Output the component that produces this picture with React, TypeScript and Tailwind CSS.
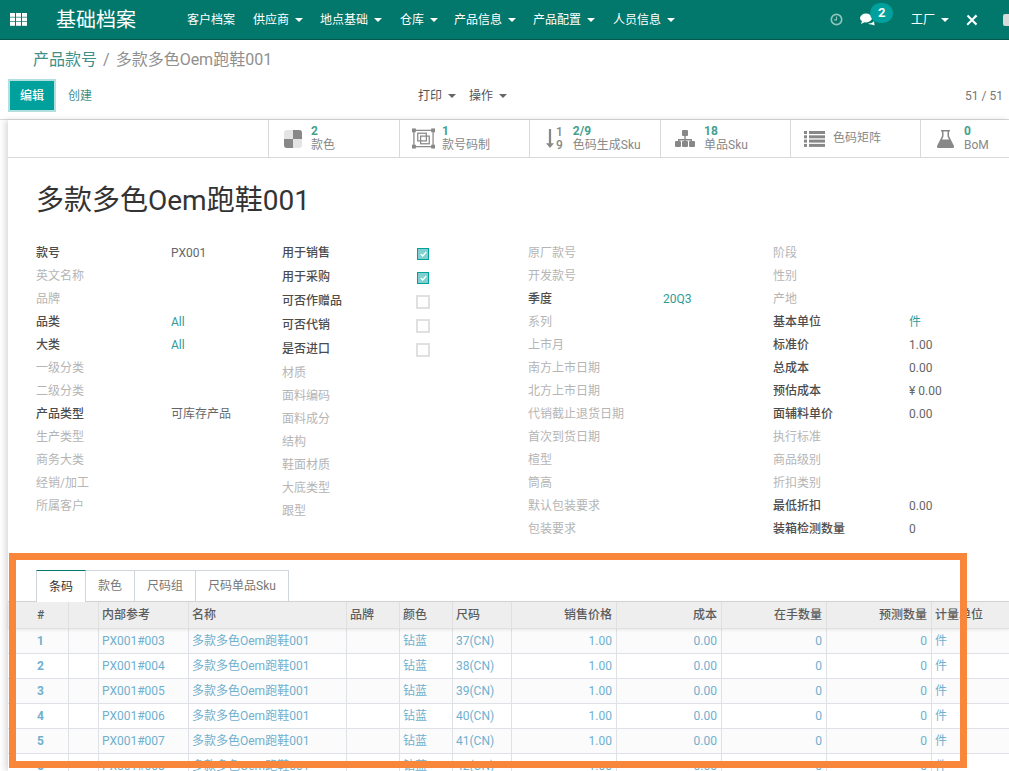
import React from "react";

const FONT = "font-['Roboto','Noto_Sans_CJK_SC',sans-serif]";

function Caret({ className = "" }: { className?: string }) {
  return <span className={"inline-block shrink-0 w-0 h-0 border-x-[4px] border-x-transparent border-t-[4px] border-t-current " + className} />;
}

const menus: [string, boolean, string][] = [
  ["客户档案", false, "mr-[18px]"],
  ["供应商", true, "mr-[17px]"],
  ["地点基础", true, "mr-[18px]"],
  ["仓库", true, "mr-[16px]"],
  ["产品信息", true, "mr-[17px]"],
  ["产品配置", true, "mr-[18px]"],
  ["人员信息", true, ""],
];

function Navbar() {
  return (
    <div className="h-[40px] shrink-0 bg-[#02776b] border-b border-b-[#02574e] flex items-center text-white text-[12px] relative whitespace-nowrap">
      <svg width="17" height="13" viewBox="0 0 17 13" className="ml-[10px] mr-[29px] shrink-0" fill="#fff">
        {[0, 6, 12].map((x) => [0, 4.5, 9].map((y) => <rect key={x + "-" + y} x={x} y={y} width="5" height="3.8" />))}
      </svg>
      <span className="text-[20px] mr-[51px] w-[80px] shrink-0 leading-none">基础档案</span>
      {menus.map(([t, c, m]) => (
        <span key={t} className={"flex items-center gap-[6px] shrink-0 " + m}>
          {t}
          {c && <Caret />}
        </span>
      ))}
      <svg width="13" height="13" viewBox="0 0 14 14" className="ml-[155px] shrink-0" fill="none" stroke="#8fc4bd" strokeWidth="1.8">
        <circle cx="7" cy="7" r="5.6" />
        <path d="M7 3.8V7.4H4.400" strokeWidth="1.200" />
      </svg>
      <div className="ml-[17px] relative flex items-center shrink-0">
        <svg width="15" height="13" viewBox="0 0 15 13" fill="#fff">
          <ellipse cx="6" cy="5" rx="6" ry="4.400" />
          <path d="M2 8l-1 3 4-2z" />
          <path d="M8 10.500c3 .2 5-.8 6-2.500l.6 4.600-3-1.200c-1.200.2-2.600 0-3.600-.9z" />
        </svg>
        <span className="absolute left-[10px] top-[-10px] w-[23px] h-[20px] rounded-full bg-[#00a09d] text-[13px] font-bold flex items-center justify-center">2</span>
      </div>
      <span className="ml-[36px] flex items-center gap-[6px] shrink-0">工厂<Caret /></span>
      <svg width="12" height="12" viewBox="0 0 12 12" className="ml-[17px] shrink-0" fill="#fff">
        <path d="M0.8 2.200L2.200.8l9 9-1.400 1.600zM7.500 3l2-2.600 2 1.800L9 4.500 1.900 11.400.5 10z" />
      </svg>
      <span className="ml-[25px] w-[12px] h-[12px] rounded-[2px] bg-[#d9d9d9] shrink-0" />
    </div>
  );
}

function ControlPanel() {
  return (
    <div className="h-[80px] shrink-0 bg-white border-b border-b-[#d9d9d9] flex flex-col">
      <div className="h-[41px] pt-[9px] pl-[33px] text-[16px] leading-[22px] text-[#8f8f8f] whitespace-nowrap">
        <span className="text-[#3f8f8a]">产品款号</span>
        <span className="mx-[6px]">/</span>
        多款多色Oem跑鞋001
      </div>
      <div className="flex items-center relative h-[29px] text-[12px] whitespace-nowrap">
        <button className="ml-[10px] w-[44px] h-[29px] bg-[#00a09d] text-white font-medium ring-[2px] ring-[#b3e0de]">编辑</button>
        <span className="ml-[14px] text-[#3f8f8a]">创建</span>
        <span className="ml-[326px] flex items-center gap-[6px] text-[#555]">打印<Caret className="text-[#666]" /></span>
        <span className="ml-[13px] flex items-center gap-[6px] text-[#555]">操作<Caret className="text-[#666]" /></span>
        <span className="ml-auto mr-[6px] text-[#777]">51 / 51</span>
      </div>
    </div>
  );
}

const ICON = "#888";
const statIcons: React.ReactNode[] = [
  <svg width="18" height="18" viewBox="0 0 18 18" key="a">
    <rect width="18" height="18" rx="3" fill="#e4e4e4" />
    <path d="M9 0h6a3 3 0 0 1 3 3v6H9zM0 9h9v9H3a3 3 0 0 1-3-3z" fill={ICON} />
  </svg>,
  <svg width="23" height="21" viewBox="0 0 24 21" key="b" fill="none" stroke={ICON} strokeWidth="1.300">
    <rect x="2" y="2" width="20" height="17" />
    <rect x="6" y="5" width="9" height="8" />
    <rect x="9" y="8" width="9" height="8" />
    <g fill={ICON} stroke="none">
      <rect width="4" height="4" /><rect x="20" width="4" height="4" /><rect y="17" width="4" height="4" /><rect x="20" y="17" width="4" height="4" />
    </g>
  </svg>,
  <span className="flex items-center gap-[2px]" key="c">
    <svg width="8" height="19" viewBox="0 0 10 20" fill={ICON} preserveAspectRatio="none"><path d="M3.600 0h2.800v15H10l-5 5-5-5h3.600z" /></svg>
    <span className="flex flex-col text-[12px] leading-[13px] font-medium text-[#888]"><span>1</span><span>9</span></span>
  </span>,
  <svg width="20" height="17" viewBox="0 0 20 17" key="d" fill={ICON}>
    <rect x="7" width="6" height="6" rx="1" />
    <path d="M9.300 6h1.400v3h6.300v3h-1.400v-1.600H10.700V12H9.300v-1.600H4.400V12H3V9h6.300z" />
    <rect y="11" width="6" height="6" rx="1" /><rect x="7" y="11" width="6" height="6" rx="1" /><rect x="14" y="11" width="6" height="6" rx="1" />
  </svg>,
  <svg width="21" height="16" viewBox="0 0 21 16" key="e" fill={ICON}>
    {[0, 4.300, 8.600, 12.900].map((y) => <g key={y}><rect y={y} width="3" height="3" /><rect x="5" y={y} width="16" height="3" /></g>)}
  </svg>,
  <svg width="17" height="18" viewBox="0 0 17 18" key="f" fill={ICON}>
    <path d="M4 0h9v1.500h-1V6l5 10c.4 1-.2 2-1.200 2H1.200C.2 18-.4 17 0 16l5-10V1.500H4zM6.500 1.500V6.400L5 9.500h7l-1.500-3.100V1.500z" fillRule="evenodd" />
  </svg>,
];

function StatButton({ icon, value, label, cls, iconCls }: { icon: React.ReactNode; value?: string; label: string; cls: string; iconCls: string }) {
  return (
    <div className={"shrink-0 h-full border-l border-l-[#d9d9d9] flex items-center " + cls}>
      <div className={"flex items-center shrink-0 " + iconCls}>{icon}</div>
      <div className="flex flex-col text-[12px] text-[#888] whitespace-nowrap">
        {value && <span className="font-bold text-[#45a08f] leading-[13px]">{value}</span>}
        <span className="leading-[15px]">{label}</span>
      </div>
    </div>
  );
}

function StatBar() {
  const items: [string | undefined, string, string, string][] = [
    ["2", "款色", "w-[131px] pl-[15px]", "mr-[9px]"],
    ["1", "款号码制", "w-[130px] pl-[12px]", "mr-[7px]"],
    ["2/9", "色码生成Sku", "w-[131px] pl-[16px]", "mr-[10px]"],
    ["18", "单品Sku", "w-[130px] pl-[14px]", "mr-[9px]"],
    [undefined, "色码矩阵", "w-[130px] pl-[13px]", "mr-[8px]"],
    ["0", "BoM", "w-[131px] pl-[16px]", "mr-[10px]"],
  ];
  return (
    <div className="h-[38px] shrink-0 border-b border-b-[#d9d9d9] flex pl-[260px] overflow-hidden">
      {items.map(([v, l, c, ic], i) => <StatButton key={l} icon={statIcons[i]} value={v} label={l} cls={c} iconCls={ic} />)}
    </div>
  );
}

type F = { l: string; v?: string; link?: boolean; strong?: boolean; check?: boolean };

const c1: F[] = [
  { l: "款号", v: "PX001", strong: true }, { l: "英文名称" }, { l: "品牌" },
  { l: "品类", v: "All", link: true, strong: true }, { l: "大类", v: "All", link: true, strong: true },
  { l: "一级分类" }, { l: "二级分类" }, { l: "产品类型", v: "可库存产品", strong: true },
  { l: "生产类型" }, { l: "商务大类" }, { l: "经销/加工" }, { l: "所属客户" },
];
const c2: F[] = [
  { l: "用于销售", check: true, strong: true }, { l: "用于采购", check: true, strong: true },
  { l: "可否作赠品", check: false, strong: true }, { l: "可否代销", check: false, strong: true },
  { l: "是否进口", check: false, strong: true }, { l: "材质" }, { l: "面料编码" }, { l: "面料成分" },
  { l: "结构" }, { l: "鞋面材质" }, { l: "大底类型" }, { l: "跟型" },
];
const c3: F[] = [
  { l: "原厂款号" }, { l: "开发款号" }, { l: "季度", v: "20Q3", link: true, strong: true }, { l: "系列" },
  { l: "上市月" }, { l: "南方上市日期" }, { l: "北方上市日期" }, { l: "代销截止退货日期" }, { l: "首次到货日期" },
  { l: "楦型" }, { l: "筒高" }, { l: "默认包装要求" }, { l: "包装要求" },
];
const c4: F[] = [
  { l: "阶段" }, { l: "性别" }, { l: "产地" }, { l: "基本单位", v: "件", link: true, strong: true },
  { l: "标准价", v: "1.00", strong: true }, { l: "总成本", v: "0.00", strong: true }, { l: "预估成本", v: "¥ 0.00", strong: true },
  { l: "面辅料单价", v: "0.00", strong: true }, { l: "执行标准" }, { l: "商品级别" }, { l: "折扣类别" },
  { l: "最低折扣", v: "0.00", strong: true }, { l: "装箱检测数量", v: "0", strong: true },
];

function Check({ on }: { on: boolean }) {
  if (on) {
    return (
      <span className="w-[12px] h-[12px] ml-[1px] mt-[2px] bg-[#80d0cf] border border-[#00a09d] flex items-center justify-center">
        <svg width="7" height="6" viewBox="0 0 7 6" fill="none" stroke="#fff" strokeWidth="1.400"><path d="M.7 3l2 2L6.300 1" /></svg>
      </span>
    );
  }
  return <span className="w-[14px] h-[14px] mt-[2px] bg-white border-2 border-[#e0e0e0]" />;
}

function Column({ items, labelW, width }: { items: F[]; labelW: string; width: string }) {
  return (
    <div className={"flex flex-col shrink-0 " + width}>
      {items.map((f) => (
        <div key={f.l} className={"flex items-center text-[12px] whitespace-nowrap " + (f.check !== undefined ? "h-[24px]" : "h-[23px]")}>
          <span className={"shrink-0 " + labelW + " " + (f.strong ? "font-medium text-[#4c4c4c]" : "text-[#b5b5b5]")}>{f.l}</span>
          {f.check !== undefined ? <Check on={f.check} /> : f.v && <span className={f.link ? "text-[#2f9c98]" : "text-[#666]"}>{f.v}</span>}
        </div>
      ))}
    </div>
  );
}

function Form() {
  return (
    <div className="pl-[28px]">
      <h1 className="pt-[26px] h-[83px] text-[28px] leading-[34px] font-normal text-[#333] whitespace-nowrap">多款多色Oem跑鞋001</h1>
      <div className="flex h-[329px]">
        <Column items={c1} labelW="w-[135px]" width="w-[246px]" />
        <Column items={c2} labelW="w-[134px]" width="w-[246px]" />
        <Column items={c3} labelW="w-[135px]" width="w-[245px]" />
        <Column items={c4} labelW="w-[136px]" width="w-[200px]" />
      </div>
    </div>
  );
}

function Tabs() {
  const tabs = ["款色", "尺码组", "尺码单品Sku"];
  return (
    <div className="pl-[28px] flex h-[31px] text-[12px] relative z-10">
      <div className="w-[50px] h-[32px] bg-white border-x border-x-[#d0d5dc] border-t border-t-[#02776b] text-[#333] flex items-center justify-center">条码</div>
      {tabs.map((t, i) => (
        <div key={t} className={"h-[31px] border-t border-r border-[#d0d5dc] text-[#777] flex items-center justify-center " + ["w-[49px]", "w-[61px]", "w-[93px]"][i]}>{t}</div>
      ))}
    </div>
  );
}

const cols = ["w-[61px]", "w-[30px]", "w-[90px]", "w-[158px]", "w-[53px]", "w-[53px]", "w-[59px]", "w-[105px]", "w-[105px]", "w-[105px]", "w-[105px]", "w-[80px]"];
const heads = ["#", "", "内部参考", "名称", "品牌", "颜色", "尺码", "销售价格", "成本", "在手数量", "预测数量", "计量单位"];

function Table() {
  const rows = [1, 2, 3, 4, 5, 6];
  const right = (i: number) => i >= 7 && i <= 10;
  return (
    <div className="border-t border-t-[#d5d5d5]">
      <div className="flex h-[27px] bg-[#eeeeee] border-b border-b-[#dfdfdf] shadow-[0_1px_3px_rgba(0,0,0,0.08)] relative">
        {heads.map((h, i) => (
          <div key={i} className={"shrink-0 h-full border-r border-r-[#e0e0e0] flex items-center text-[12px] font-medium text-[#5c5c5c] whitespace-nowrap " + cols[i] + " " + (right(i) ? "justify-end pr-[4px]" : i === 0 ? "pl-[29px]" : "pl-[3px]")}>
            {h}
          </div>
        ))}
      </div>
      {rows.map((n) => {
        const vals = [String(n), "", "PX001#00" + (n + 2), "多款多色Oem跑鞋001", "", "钻蓝", 36 + n + "(CN)", "1.00", "0.00", "0", "0", "件"];
        return (
          <div key={n} className={"flex h-[25px] border-b border-b-[#dee2e6] " + (n % 2 ? "bg-[#fbfbfb]" : "bg-white")}>
            {vals.map((v, i) => (
              <div key={i} className={"shrink-0 h-full border-r border-r-[#dee2e6] flex items-center text-[12px] text-[#6fb0cf] whitespace-nowrap " + cols[i] + " " + (right(i) ? "justify-end pr-[4px]" : i === 0 ? "pl-[29px] font-bold" : "pl-[3px]")}>
                {v}
              </div>
            ))}
          </div>
        );
      })}
    </div>
  );
}

export default function App() {
  return (
    <div className={"w-[1009px] h-[771px] overflow-hidden relative flex flex-col bg-white " + FONT}>
      <Navbar />
      <ControlPanel />
      <div className="flex flex-col flex-1 min-h-0 ml-[8px] bg-white shadow-[-3px_0_6px_rgba(0,0,0,0.14)]">
        <StatBar />
        <Form />
        <Tabs />
        <Table />
      </div>
      <div className="absolute left-[9px] top-[553px] w-[958px] h-[215px] border-[7px] border-[#f9873b] pointer-events-none z-20" />
    </div>
  );
}
